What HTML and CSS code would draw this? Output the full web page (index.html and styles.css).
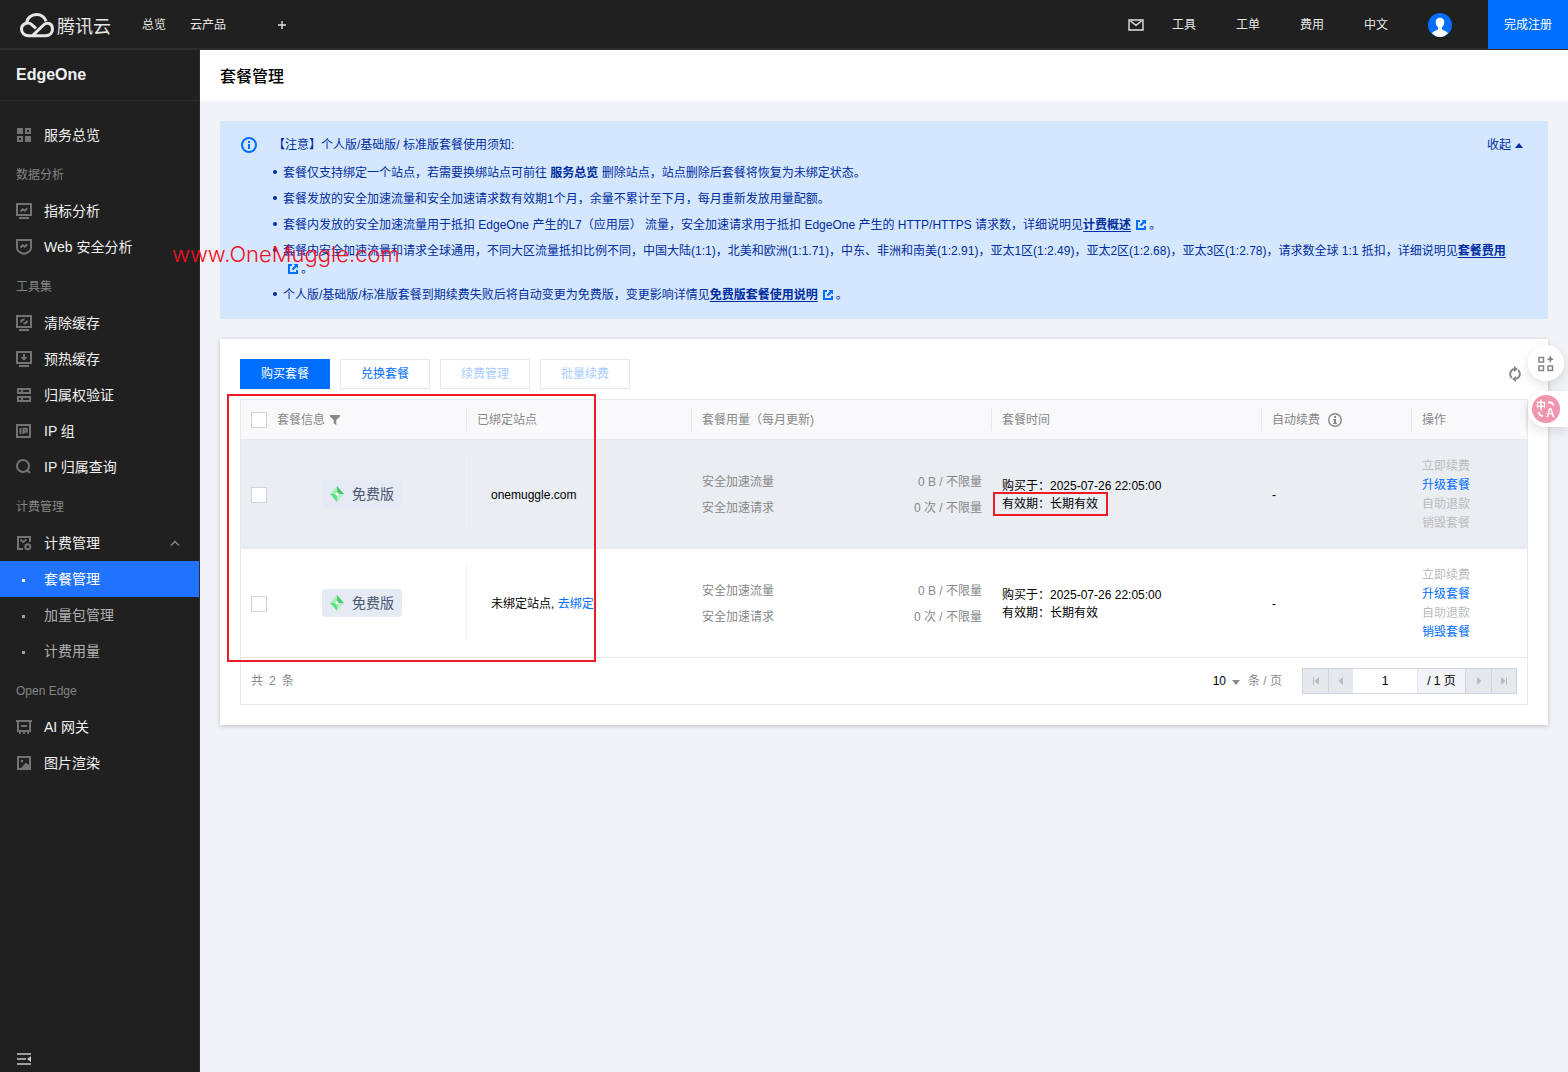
FILE: index.html
```html
<!DOCTYPE html>
<html lang="zh-CN">
<head>
<meta charset="utf-8">
<meta name="viewport" content="width=device-width, initial-scale=1">
<title>套餐管理 - EdgeOne</title>
<link rel="stylesheet" href="styles.css">
</head>
<body>
<svg class="sprite" aria-hidden="true">
  <symbol id="i-ext" viewBox="0 0 10 10"><path d="M4 1H1v8h8V6" fill="none" stroke="currentColor" stroke-width="2"/><path d="M5.500 0H10v4.500L8.500 3 5.200 6.300 3.700 4.800 7 1.500z" fill="currentColor"/></symbol>
  <symbol id="i-diamond" viewBox="0 0 14 16"><path d="M7 0v8H0z" fill="#a5eeb5"/><path d="M7 0l7 8H7z" fill="#4cc96e"/><path d="M14 8l-7 8V8z" fill="#b4f0c0"/><path d="M0 8h7v8z" fill="#5fe083"/><path d="M7 6l2 2-2 2-2-2z" fill="#fff"/></symbol>
</svg>

<header class="topbar">
  <a class="logo" href="#">
    <svg width="34" height="25" viewBox="0 0 34 25" fill="none" stroke="#e6e6e6" stroke-width="3"><path d="M6.500 10.500C7 5 11.500 1.500 16.500 1.500c4.500 0 8 2.600 9.600 6.600"/><path d="M12.500 22.700L23.500 12c4-3.800 9-1 9 4 0 3.500-2.500 6.700-7 6.700H8.500c-4 0-7-2.800-7-6.400 0-6 6.800-8 10.500-4.500l4 3.500"/></svg>
    <span>腾讯云</span>
  </a>
  <nav class="topnav">
    <a href="#">总览</a>
    <a href="#">云产品</a>
    <button class="plain add" aria-label="添加"><svg width="8" height="8" viewBox="0 0 8 8"><path d="M4 0v8M0 4h8" stroke="#e0e0e0" stroke-width="1.400"/></svg></button>
  </nav>
  <nav class="tools">
    <a href="#" aria-label="消息"><svg width="16" height="12" viewBox="0 0 16 12" fill="none" stroke="#e0e0e0" stroke-width="1.400"><path d="M1 1h14v10H1zM2.500 2L8 6.300 13.500 2"/></svg></a>
    <a href="#">工具</a>
    <a href="#">工单</a>
    <a href="#">费用</a>
    <a href="#">中文</a>
    <a href="#" aria-label="账号"><svg width="24" height="24" viewBox="0 0 24 24"><circle cx="12" cy="12" r="12" fill="#006eff"/><path d="M12 4.800c-2.700 0-4.400 1.900-4.300 4.500.1 2 .9 3.900 2.400 5.200v1.700c-.6 1-4.700 1.500-6.100 4C6 22.400 8.700 24 12 24s6-1.600 8-3.800c-1.400-2.500-5.500-3-6.100-4v-1.700c1.500-1.300 2.300-3.200 2.400-5.200.1-2.600-1.600-4.500-4.300-4.500z" fill="#fff"/></svg></a>
  </nav>
  <button class="register">完成注册</button>
</header>

<div class="shell">
  <aside class="sidebar">
    <h2 class="product">EdgeOne</h2>
    <nav class="menu">
      <a class="item" href="#"><svg viewBox="0 0 16 16"><path d="M1 1h6v6H1zM9 1h6v6H9zM1 9h6v6H1zM9 9h6v6H9zM11 3v2h2V3zM3 11v2h2v-2z" fill="#737373" fill-rule="evenodd"/></svg>服务总览</a>
      <p class="group">数据分析</p>
      <a class="item" href="#"><svg viewBox="0 0 16 16"><path d="M1 1h14v11H1zM3 15h10" class="st"/><path d="M4.500 8.500l2.200-2.200 2 1.500 2.600-2.500" class="st"/></svg>指标分析</a>
      <a class="item" href="#"><svg viewBox="0 0 16 16"><path d="M1 1h14v8c0 3-3 4.700-7 6-4-1.300-7-3-7-6z" class="st"/><path d="M4.500 8.500l2.200-2.200 2 1.500 2.600-2.500" class="st"/></svg>Web 安全分析</a>
      <p class="group">工具集</p>
      <a class="item" href="#"><svg viewBox="0 0 16 16"><path d="M1 1h14v11H1zM3 15h10" class="st"/><path d="M5 7.500c0-2 1.500-3 3.500-3M11 5.500c0 2-1.500 3-3.500 3" class="st"/></svg>清除缓存</a>
      <a class="item" href="#"><svg viewBox="0 0 16 16"><path d="M1 1h14v11H1zM3 15h10M8 3v4" class="st"/><path d="M4.500 6h7L8 9.800z" fill="#737373"/></svg>预热缓存</a>
      <a class="item" href="#"><svg viewBox="0 0 16 16"><path d="M1 1h14v6H1zM1 9h14v6H1zM3 3v2h2V3zM7 3v2h6V3zM3 11v2h2v-2zM7 11v2h6v-2z" fill="#737373" fill-rule="evenodd"/></svg>归属权验证</a>
      <a class="item" href="#"><svg viewBox="0 0 16 16"><path d="M1 2h13v12H1z" class="st"/><path d="M4.500 5v6M7.500 11V5.800h3.200v2.900H8" class="st"/></svg>IP 组</a>
      <a class="item" href="#"><svg viewBox="0 0 16 16"><circle cx="7" cy="7" r="6" class="st"/><path d="M11 11l3 3" class="st"/></svg>IP 归属查询</a>
      <p class="group">计费管理</p>
      <a class="item" href="#"><svg viewBox="0 0 16 16"><path d="M7 14H2V2h12v5" class="st"/><path d="M4.500 4.500L7 7l3.500-2.500" class="st"/><circle cx="11.800" cy="11.800" r="2.500" class="st"/></svg>计费管理<svg class="caret" viewBox="0 0 16 16"><path d="M4 10.500l4-4 4 4" fill="none" stroke="#8a8a8a" stroke-width="1.300"/></svg></a>
      <a class="item sub active" href="#"><i></i>套餐管理</a>
      <a class="item sub" href="#"><i></i>加量包管理</a>
      <a class="item sub" href="#"><i></i>计费用量</a>
      <p class="group">Open Edge</p>
      <a class="item" href="#"><svg viewBox="0 0 16 16"><path d="M0 2h16M2 2v10h12V2M5 7h6M4 12v3M8 12v3M12 12v3" class="st"/></svg>AI 网关</a>
      <a class="item" href="#"><svg viewBox="0 0 16 16"><path d="M2 2h12v12H2z" class="st"/><path d="M5 13l5-5.500 4 3.500v3H5z" fill="#737373"/><circle cx="6" cy="6" r="1.300" fill="#737373"/></svg>图片渲染</a>
    </nav>
    <button class="plain fold" aria-label="收起菜单"><svg width="14" height="12" viewBox="0 0 14 12"><path d="M0 1h14M0 11h14M0 6h9" stroke="#c8c8c8" stroke-width="1.500"/><path d="M14 3v6l-4-3z" fill="#c8c8c8"/></svg></button>
  </aside>

  <main class="main">
    <div class="pagehead"><h1>套餐管理</h1></div>
    <div class="content">
      <section class="alert">
        <svg class="info" width="16" height="16" viewBox="0 0 16 16"><circle cx="8" cy="8" r="7" fill="none" stroke="#006eff" stroke-width="2"/><path d="M7 4h2v2H7zM7 7h2v5H7z" fill="#006eff"/></svg>
        <div class="alert-body">
          <div class="alert-title"><span>【注意】个人版/基础版/ 标准版套餐使用须知:</span><button class="plain collapse">收起<i></i></button></div>
          <ul>
            <li>套餐仅支持绑定一个站点，若需要换绑站点可前往 <a href="#">服务总览</a> 删除站点，站点删除后套餐将恢复为未绑定状态。</li>
            <li>套餐发放的安全加速流量和安全加速请求数有效期1个月，余量不累计至下月，每月重新发放用量配额。</li>
            <li>套餐内发放的安全加速流量用于抵扣 EdgeOne 产生的L7（应用层） 流量，安全加速请求用于抵扣 EdgeOne 产生的 HTTP/HTTPS 请求数，详细说明见<a class="u" href="#">计费概述</a><span class="ext"><svg><use href="#i-ext"/></svg>。</span></li>
            <li>套餐内安全加速流量和请求全球通用，不同大区流量抵扣比例不同，中国大陆(1:1)，北美和欧洲(1:1.71)，中东、非洲和南美(1:2.91)，亚太1区(1:2.49)，亚太2区(1:2.68)，亚太3区(1:2.78)，请求数全球 1:1 抵扣，详细说明见<a class="u" href="#">套餐费用</a><span class="ext"><svg><use href="#i-ext"/></svg>。</span></li>
            <li>个人版/基础版/标准版套餐到期续费失败后将自动变更为免费版，变更影响详情见<a class="u" href="#">免费版套餐使用说明</a><span class="ext"><svg><use href="#i-ext"/></svg>。</span></li>
          </ul>
        </div>
        <span class="watermark">www.OneMuggle.com</span>
      </section>

      <section class="card">
        <div class="toolbar">
          <button class="btn primary">购买套餐</button>
          <button class="btn">兑换套餐</button>
          <button class="btn" disabled>续费管理</button>
          <button class="btn" disabled>批量续费</button>
          <button class="plain refresh" aria-label="刷新"><svg width="12" height="16" viewBox="0 0 12 16" fill="none" stroke="#888" stroke-width="2"><path d="M2.800 12C.2 9.500.5 4 5.500 3M9.200 4c2.600 2.500 2.300 8-2.700 9"/><path d="M5 0l4 3-4 3zM7 16l-4-3 4-3z" fill="#888" stroke="none"/></svg></button>
        </div>
        <div class="grid">
          <table>
            <colgroup><col class="c-check"><col class="c-info"><col class="c-site"><col class="c-usage"><col class="c-time"><col class="c-renew"><col></colgroup>
            <thead>
              <tr>
                <th class="check"><input type="checkbox" aria-label="全选"></th>
                <th class="line">套餐信息 <svg class="filter" width="10" height="10" viewBox="0 0 10 10"><path d="M0 0h10v1.500L6.300 5v5L3.700 8.500V5L0 1.500z" fill="#888"/></svg></th>
                <th class="line">已绑定站点</th>
                <th class="line">套餐用量（每月更新)</th>
                <th class="line">套餐时间</th>
                <th class="line">自动续费 <svg class="tip" width="14" height="14" viewBox="0 0 14 14"><circle cx="7" cy="7" r="6.300" fill="none" stroke="#888" stroke-width="1.400"/><path d="M6 3h2v2H6zM5 6h3v4h1v1H5v-1h1V7H5z" fill="#888"/></svg></th>
                <th class="line">操作</th>
              </tr>
            </thead>
            <tbody>
              <tr class="hover">
                <td class="check"><input type="checkbox" aria-label="选择 onemuggle.com"></td>
                <td class="plan line"><span class="tag"><svg width="14" height="16"><use href="#i-diamond"/></svg>免费版</span></td>
                <td class="site">onemuggle.com</td>
                <td><dl class="usage"><dt>安全加速流量</dt><dd>0 B / 不限量</dd><dt>安全加速请求</dt><dd>0 次 / 不限量</dd></dl></td>
                <td><div class="time">购买于：2025-07-26 22:05:00<br><span class="marked">有效期：长期有效</span></div></td>
                <td>-</td>
                <td><div class="ops"><button disabled>立即续费</button><button>升级套餐</button><button disabled>自助退款</button><button disabled>销毁套餐</button></div></td>
              </tr>
              <tr>
                <td class="check"><input type="checkbox" aria-label="选择未绑定站点"></td>
                <td class="plan line"><span class="tag"><svg width="14" height="16"><use href="#i-diamond"/></svg>免费版</span></td>
                <td class="site">未绑定站点, <a href="#">去绑定</a></td>
                <td><dl class="usage"><dt>安全加速流量</dt><dd>0 B / 不限量</dd><dt>安全加速请求</dt><dd>0 次 / 不限量</dd></dl></td>
                <td><div class="time">购买于：2025-07-26 22:05:00<br>有效期：长期有效</div></td>
                <td>-</td>
                <td><div class="ops"><button disabled>立即续费</button><button>升级套餐</button><button disabled>自助退款</button><button>销毁套餐</button></div></td>
              </tr>
            </tbody>
          </table>
          <div class="pager">
            <span class="total">共<b>2</b>条</span>
            <button class="plain size">10<i></i></button>
            <span class="per">条 / 页</span>
            <div class="pages">
              <button disabled aria-label="第一页"><svg width="8" height="8" viewBox="0 0 8 8"><path d="M1 0h1v8H1zM7 0v8L2.500 4z"/></svg></button>
              <button disabled aria-label="上一页"><svg width="8" height="8" viewBox="0 0 8 8"><path d="M6 0v8L1.500 4z"/></svg></button>
              <input type="text" value="1" aria-label="页码">
              <span>/ 1 页</span>
              <button disabled aria-label="下一页"><svg width="8" height="8" viewBox="0 0 8 8"><path d="M2 0v8l4.500-4z"/></svg></button>
              <button disabled aria-label="最后一页"><svg width="8" height="8" viewBox="0 0 8 8"><path d="M6 0h1v8H6zM1 0v8l4.500-4z"/></svg></button>
            </div>
          </div>
          <div class="frame"></div>
        </div>
      </section>
    </div>
  </main>
</div>

<div class="floats">
  <button class="apps" aria-label="应用"><svg width="16" height="17" viewBox="0 0 16 17" fill="none" stroke="#858585" stroke-width="1.500"><path d="M1 2.500h4.500v4.500H1zM1 11h4.500v4.500H1zM10 11h4.500v4.500H10z"/><path d="M12.300 0l1.100 3 2.600 1.200-2.600 1.100-1.100 3-1.100-3-2.700-1.100 2.700-1.200z" fill="#858585" stroke="none"/></svg></button>
  <button class="translate" aria-label="翻译"><svg width="28" height="28" viewBox="0 0 28 28"><circle cx="14" cy="14" r="14" fill="#f096ae"/><text x="4" y="14" font-size="10">中</text><text x="14" y="22" font-size="12">A</text><path d="M16 7.500h2c2 0 3 1 3 3M7 17c0 2.500 1 4 4 4" fill="none" stroke="#fff" stroke-width="1.800"/></svg></button>
</div>
</body>
</html>
```
FILE: styles.css
```css
* { box-sizing: border-box; }
body {
  margin: 0;
  min-height: 100vh;
  display: flex;
  flex-direction: column;
  background: #f2f3f7;
  color: #000;
  font: 12px/18px "Liberation Sans", "Noto Sans CJK SC", sans-serif;
}
a { color: #006eff; text-decoration: none; }
h1, h2, p, ul, dl, dd { margin: 0; padding: 0; }
button, input { font: inherit; margin: 0; }
button { cursor: pointer; }
svg { display: block; flex: none; }
.sprite { position: absolute; width: 0; height: 0; }
.plain { border: 0; padding: 0; background: none; color: inherit; display: flex; align-items: center; }

/* top bar */
.topbar {
  display: flex;
  align-items: center;
  height: 50px;
  padding-left: 20px;
  background: #202020;
  box-shadow: inset 0 -2px #2d2d2d;
}
.topbar a { color: #e6e6e6; }
.logo { display: flex; align-items: center; gap: 3px; font-size: 18px; line-height: 24px; }
.logo span { font-family: "Noto Sans CJK SC", sans-serif; }
.topnav { display: flex; align-items: center; gap: 24px; margin-left: 31px; }
.add { margin-left: 28px; }
.tools { display: flex; align-items: center; gap: 40px; margin-left: auto; }
.tools a:first-child { margin-right: -12px; }
.register { align-self: flex-start; width: 80px; height: 49px; margin-left: 36px; padding: 0; border: 0; background: #006eff; color: #fff; }

.shell { flex: 1; display: flex; }

/* side menu */
.sidebar {
  flex: none;
  width: 200px;
  display: flex;
  flex-direction: column;
  background: #202020;
  border-right: 1px solid #2d2d2d;
  color: #fff;
}
.product { height: 51px; padding: 0 16px; font-size: 16px; line-height: 49px; color: #f0f0f0; border-bottom: 1px solid #2d2d2d; }
.menu { padding-top: 16px; }
.item { display: flex; align-items: center; gap: 12px; height: 36px; padding: 0 16px; font-size: 14px; color: #f0f0f0; }
.item svg { width: 16px; height: 16px; }
.item .caret { margin-left: auto; }
.st { fill: none; stroke: #737373; stroke-width: 2; }
.group { height: 40px; padding: 3px 16px 0; line-height: 38px; color: #858585; }
.sub { color: #b0b0b0; }
.sub i { width: 3px; height: 3px; margin: 2px 7px 0 6px; background: #a0a0a0; }
.sub.active { background: #2073ff; color: #fff; }
.sub.active i { background: #fff; }
.fold { margin: auto 0 7px 17px; }

/* page */
.main { flex: 1; min-width: 0; }
.pagehead { height: 51px; padding: 0 20px; background: #fff; }
.pagehead h1 { font-size: 16px; line-height: 50px; font-weight: 500; font-family: "Noto Sans CJK SC", sans-serif; }
.content { display: grid; gap: 20px; padding: 20px; }

.alert { position: relative; display: flex; gap: 16px; padding: 15px 25px 15px 21px; background: #d5e7ff; color: #002da0; }
.alert .info { margin-top: 1px; }
.alert-body { flex: 1; min-width: 0; }
.alert-title { display: flex; justify-content: space-between; }
.collapse i { margin-left: 4px; border: solid transparent; border-width: 0 4px 5px; border-bottom-color: #002da0; }
.alert ul { margin: 10px 15px 0 0; padding-left: 10px; list-style: none; }
.alert li { position: relative; margin-bottom: 8px; }
.alert li:last-child { margin-bottom: 0; }
.alert li::before { content: ""; position: absolute; left: -10px; top: 6px; width: 4px; height: 4px; border-radius: 50%; background: #002da0; }
.alert li a { color: inherit; font-weight: 700; }
.alert li .u { text-decoration: underline; text-underline-offset: 2px; }
.ext { white-space: nowrap; }
.ext svg { display: inline-block; width: 10px; height: 10px; margin: 0 3px 0 5px; vertical-align: -1px; color: #006eff; }
.watermark { position: absolute; left: -48px; top: 118px; font: 300 22px/30px Inter, "Liberation Sans", sans-serif; color: #f01020; pointer-events: none; white-space: nowrap; }

.card { padding: 20px; background: #fff; box-shadow: 0 1px 4px rgba(54, 58, 80, .3); }
.toolbar { display: flex; align-items: center; gap: 10px; margin-bottom: 10px; }
.btn { width: 90px; height: 30px; padding: 0; border: 1px solid #e5e8ed; background: #fff; color: #006eff; }
.btn.primary { border-color: #006eff; background: #006eff; color: #fff; }
.btn:disabled { color: #a8cdff; }
.refresh { margin: 0 7px 0 auto; }

.grid { position: relative; border: 1px solid #e5e8ed; }
.frame { position: absolute; left: -14px; top: -6px; width: 369px; height: 268px; border: 2px solid #ed1c24; pointer-events: none; }
table { width: 100%; table-layout: fixed; border-collapse: separate; border-spacing: 0; }
.c-check { width: 26px; }
.c-info { width: 200px; }
.c-site { width: 225px; }
.c-usage { width: 300px; }
.c-time { width: 270px; }
.c-renew { width: 150px; }
th, td { padding: 0 10px; text-align: left; border-bottom: 1px solid #e5e8ed; }
th { height: 40px; color: #888; background: #f9f9fc; white-space: nowrap; font-weight: 400; }
td { height: 109px; padding-top: 2px; }
th.check { padding: 0 0 0 10px; }
td.check { padding: 2px 0 0 10px; }
.line { background-image: linear-gradient(#e5e8ed, #e5e8ed); background-repeat: no-repeat; background-position: right center; background-size: 1px 23px; }
td.line { background-image: linear-gradient(#f0f1f5, #f0f1f5); background-size: 1px 76px; }
th svg { display: inline-block; vertical-align: middle; }
.filter { margin-left: 2px; }
.tip { margin-left: 5px; }
.hover td { background-color: #eaedf2; }
input[type="checkbox"] { appearance: none; display: block; width: 16px; height: 16px; border: 1px solid #cfd5de; background: #fff; }
.plan { padding: 0 10px 0 0; text-align: center; }
.tag { display: inline-flex; align-items: center; gap: 8px; height: 28px; padding: 0 8px; border-radius: 4px; background: #e5eaf4; color: #495670; font-size: 14px; }
.site { padding-left: 24px; }
.usage { display: grid; grid-template-columns: 1fr auto; line-height: 26px; color: #888; }
.usage dd { text-align: right; }
.marked { position: relative; }
.marked::after { content: ""; position: absolute; inset: -5px -10px -5px -9px; border: 2px solid #ed1c24; pointer-events: none; }
.ops { display: flex; flex-direction: column; align-items: flex-start; }
.ops button { padding: 0; border: 0; background: none; color: #006eff; line-height: 19px; }
.ops button:disabled { color: #bbb; }

.pager { display: flex; align-items: center; height: 46px; padding: 0 10px; color: #888; }
.total { margin-right: auto; }
.total b { margin: 0 6px; font-weight: 400; }
.size { color: #000; }
.size i { margin: 3px 8px 0 6px; border: solid transparent; border-width: 5px 4px 0; border-top-color: #888; }
.per { margin-right: 20px; }
.pages { display: flex; height: 26px; border: 1px solid #cfd5de; color: #000; }
.pages button { width: 25px; padding: 0; border: 0; background: #e5e8ed; display: flex; align-items: center; justify-content: center; fill: #bbb; }
.pages button + button { border-left: 1px solid #cfd5de; }
.pages input { width: 64px; padding: 0; border: 0; text-align: center; color: #000; }
.pages span { width: 49px; line-height: 24px; text-align: center; background: #f2f4f8; border-right: 1px solid #cfd5de; border-left: 1px solid #e5e8ed; }

/* floating tools */
.floats { position: fixed; right: 0; top: 345px; width: 40px; display: grid; gap: 10px; }
.floats button { display: flex; align-items: center; height: 36px; border: 0; background: rgba(255, 255, 255, .9); box-shadow: 0 4px 12px rgba(0, 0, 0, .12); }
.apps { width: 36px; padding: 0; justify-content: center; border-radius: 50%; }
.translate { padding: 0 4px; border-radius: 18px 0 0 18px; }
.translate text { fill: #fff; font-weight: 700; }
```
